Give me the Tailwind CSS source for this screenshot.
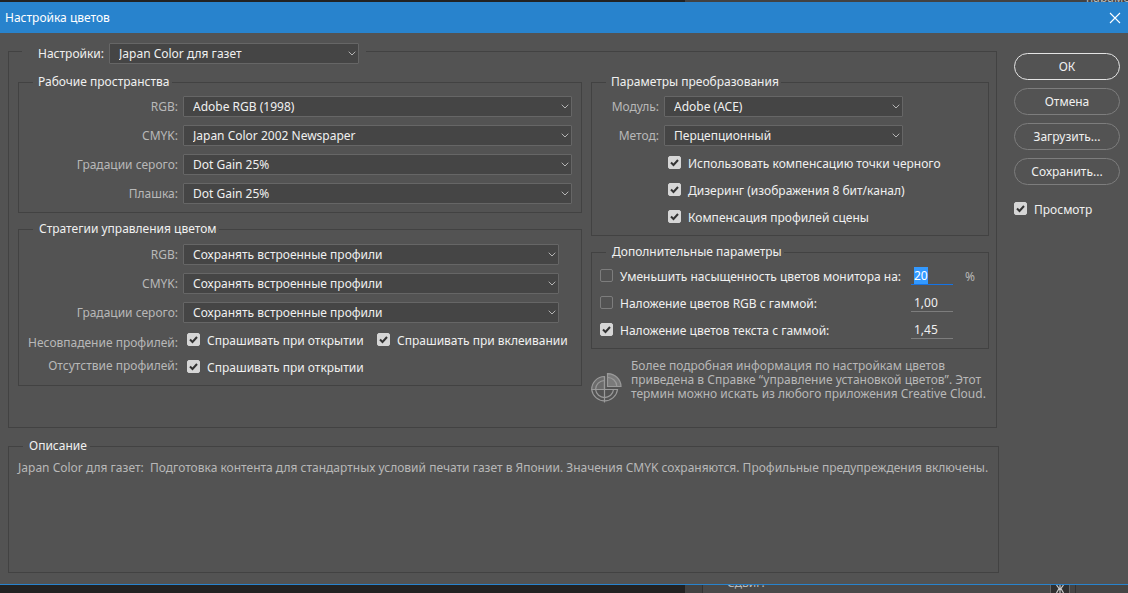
<!DOCTYPE html>
<html lang="ru">
<head>
<meta charset="utf-8">
<meta name="viewport" content="width=device-width, initial-scale=1">
<title>Настройка цветов</title>
<script src="https://cdn.jsdelivr.net/npm/@tailwindcss/browser@4"></script>
</head>
<body class="min-h-screen flex flex-col bg-[#535353] text-[#f0f0f0] text-[12px] leading-[16px] font-['Noto_Sans','Open_Sans',sans-serif]">
<svg class="hidden" aria-hidden="true">
  <symbol id="chevron" viewBox="0 0 8 5"><path d="M0.7 0.7 4 4 7.3 0.7" fill="none" stroke="#b4b4b4" stroke-width="1"/></symbol>
</svg>

<!-- Application window behind the dialog, upper edge -->
<div class="h-[2px] shrink-0 flex overflow-hidden bg-[#222]" aria-hidden="true">
  <div class="w-[685px]"></div>
  <div class="flex-1 flex items-end justify-end bg-[#424242] text-[#b8b8b8]"><span class="w-[42px] -mb-1 overflow-hidden">параметры</span></div>
</div>

<header class="h-[31px] shrink-0 flex items-center justify-between bg-[#2883cd] pl-[5px] pr-[7px] text-white">
  <h1>Настройка цветов</h1>
  <button type="button" aria-label="Закрыть" class="w-3 h-3">
    <svg viewBox="0 0 12 12" class="w-3 h-3"><path d="M1 1 11 11M11 1 1 11" stroke="#fff" stroke-width="1.1" fill="none"/></svg>
  </button>
</header>

<form class="flex-1 flex pl-2 pr-2 pt-[10px] pb-[11px]">
  <div class="flex-1 min-w-0 flex flex-col gap-[10px]">
    <fieldset class="min-w-0 mr-[2px] border border-[#424242] pl-[9px] pr-[7px] pb-[23px]">
      <legend class="ml-1 h-[17px] pl-4 pr-[7px]">
        <span class="flex items-start gap-[5px]">
          <label for="preset" class="pt-[3px]">Настройки:</label>
          <span class="relative w-[250px]">
            <select id="preset" class="block appearance-none w-full h-[21px] pl-[9px] rounded-[1px] border border-[#666] bg-[#454545]"><option>Japan Color для газет</option></select>
            <svg class="absolute right-[3px] top-2 w-2 h-[5px] pointer-events-none"><use href="#chevron"/></svg>
          </span>
        </span>
      </legend>

      <div class="flex gap-[9px] pt-[14px]">
        <div class="w-[564px] shrink-0 flex flex-col gap-2">
          <fieldset class="min-w-0 border border-[#424242] pl-2 pr-[9px] pb-2">
            <legend class="ml-[6px] pl-[5px] pr-[2px]">Рабочие пространства</legend>
            <div class="grid grid-cols-[151px_1fr] gap-x-[5px] gap-y-2 items-center pt-[6px]">
              <label for="ws-rgb" class="text-right text-[#b8b8b8]">RGB:</label>
              <span class="relative"><select id="ws-rgb" class="block appearance-none w-full h-[21px] pl-[9px] rounded-[1px] border border-[#666] bg-[#454545]"><option>Adobe RGB (1998)</option></select><svg class="absolute right-[3px] top-2 w-2 h-[5px] pointer-events-none"><use href="#chevron"/></svg></span>
              <label for="ws-cmyk" class="text-right text-[#b8b8b8]">CMYK:</label>
              <span class="relative"><select id="ws-cmyk" class="block appearance-none w-full h-[21px] pl-[9px] rounded-[1px] border border-[#666] bg-[#454545]"><option>Japan Color 2002 Newspaper</option></select><svg class="absolute right-[3px] top-2 w-2 h-[5px] pointer-events-none"><use href="#chevron"/></svg></span>
              <label for="ws-gray" class="text-right text-[#b8b8b8]">Градации серого:</label>
              <span class="relative"><select id="ws-gray" class="block appearance-none w-full h-[21px] pl-[9px] rounded-[1px] border border-[#666] bg-[#454545]"><option>Dot Gain 25%</option></select><svg class="absolute right-[3px] top-2 w-2 h-[5px] pointer-events-none"><use href="#chevron"/></svg></span>
              <label for="ws-spot" class="text-right text-[#b8b8b8]">Плашка:</label>
              <span class="relative"><select id="ws-spot" class="block appearance-none w-full h-[21px] pl-[9px] rounded-[1px] border border-[#666] bg-[#454545]"><option>Dot Gain 25%</option></select><svg class="absolute right-[3px] top-2 w-2 h-[5px] pointer-events-none"><use href="#chevron"/></svg></span>
            </div>
          </fieldset>

          <fieldset class="min-w-0 border border-[#424242] pl-2 pr-[9px] pb-[9px]">
            <legend class="ml-[6px] pl-[6px] pr-[2px]">Стратегии управления цветом</legend>
            <div class="grid grid-cols-[151px_1fr] gap-x-[5px] gap-y-2 items-center pt-[7px] pr-[13px]">
              <label for="pol-rgb" class="text-right text-[#b8b8b8]">RGB:</label>
              <span class="relative"><select id="pol-rgb" class="block appearance-none w-full h-[21px] pl-[9px] rounded-[1px] border border-[#666] bg-[#454545]"><option>Сохранять встроенные профили</option></select><svg class="absolute right-[3px] top-2 w-2 h-[5px] pointer-events-none"><use href="#chevron"/></svg></span>
              <label for="pol-cmyk" class="text-right text-[#b8b8b8]">CMYK:</label>
              <span class="relative"><select id="pol-cmyk" class="block appearance-none w-full h-[21px] pl-[9px] rounded-[1px] border border-[#666] bg-[#454545]"><option>Сохранять встроенные профили</option></select><svg class="absolute right-[3px] top-2 w-2 h-[5px] pointer-events-none"><use href="#chevron"/></svg></span>
              <label for="pol-gray" class="text-right text-[#b8b8b8]">Градации серого:</label>
              <span class="relative"><select id="pol-gray" class="block appearance-none w-full h-[21px] pl-[9px] rounded-[1px] border border-[#666] bg-[#454545]"><option>Сохранять встроенные профили</option></select><svg class="absolute right-[3px] top-2 w-2 h-[5px] pointer-events-none"><use href="#chevron"/></svg></span>
            </div>
            <div class="flex gap-[9px] pt-[10px]">
              <div class="w-[151px] pt-[2px] flex flex-col gap-[7px] text-right text-[#b8b8b8]"><span>Несовпадение профилей:</span><span>Отсутствие профилей:</span></div>
              <div class="grid grid-cols-[190px_auto] gap-y-[11px] whitespace-nowrap">
                <label class="flex gap-[7px]"><input type="checkbox" checked class="appearance-none shrink-0 w-[13px] h-[13px] rounded-[2px] border border-[#7d7d7d] checked:border-[#d6d6d6] checked:bg-[#d6d6d6] checked:bg-[url('data:image/svg+xml,%3Csvg%20xmlns=%22http://www.w3.org/2000/svg%22%20viewBox=%220%200%2011%2011%22%3E%3Cpath%20d=%22M2%205.5%204.5%208%209%203%22%20fill=%22none%22%20stroke=%22%23333%22%20stroke-width=%222%22/%3E%3C/svg%3E')]"><span>Спрашивать при открытии</span></label>
                <label class="flex gap-[7px]"><input type="checkbox" checked class="appearance-none shrink-0 w-[13px] h-[13px] rounded-[2px] border border-[#7d7d7d] checked:border-[#d6d6d6] checked:bg-[#d6d6d6] checked:bg-[url('data:image/svg+xml,%3Csvg%20xmlns=%22http://www.w3.org/2000/svg%22%20viewBox=%220%200%2011%2011%22%3E%3Cpath%20d=%22M2%205.5%204.5%208%209%203%22%20fill=%22none%22%20stroke=%22%23333%22%20stroke-width=%222%22/%3E%3C/svg%3E')]"><span>Спрашивать при вклеивании</span></label>
                <label class="flex gap-[7px]"><input type="checkbox" checked class="appearance-none shrink-0 w-[13px] h-[13px] rounded-[2px] border border-[#7d7d7d] checked:border-[#d6d6d6] checked:bg-[#d6d6d6] checked:bg-[url('data:image/svg+xml,%3Csvg%20xmlns=%22http://www.w3.org/2000/svg%22%20viewBox=%220%200%2011%2011%22%3E%3Cpath%20d=%22M2%205.5%204.5%208%209%203%22%20fill=%22none%22%20stroke=%22%23333%22%20stroke-width=%222%22/%3E%3C/svg%3E')]"><span>Спрашивать при открытии</span></label>
              </div>
            </div>
          </fieldset>
        </div>

        <div class="flex-1 min-w-0 flex flex-col whitespace-nowrap">
          <fieldset class="min-w-0 border border-[#424242] pl-2 pr-[85px] pb-[9px]">
            <legend class="ml-[6px] pl-[5px] pr-[2px]">Параметры преобразования</legend>
            <div class="grid grid-cols-[59px_1fr] gap-x-[5px] gap-y-2 items-center pt-[6px]">
              <label for="engine" class="text-right text-[#b8b8b8]">Модуль:</label>
              <span class="relative"><select id="engine" class="block appearance-none w-full h-[21px] pl-[9px] rounded-[1px] border border-[#666] bg-[#454545]"><option>Adobe (ACE)</option></select><svg class="absolute right-[3px] top-2 w-2 h-[5px] pointer-events-none"><use href="#chevron"/></svg></span>
              <label for="intent" class="text-right text-[#b8b8b8]">Метод:</label>
              <span class="relative"><select id="intent" class="block appearance-none w-full h-[21px] pl-[9px] rounded-[1px] border border-[#666] bg-[#454545]"><option>Перцепционный</option></select><svg class="absolute right-[3px] top-2 w-2 h-[5px] pointer-events-none"><use href="#chevron"/></svg></span>
            </div>
            <div class="flex flex-col gap-[11px] pl-[68px] pt-[10px]">
              <label class="flex gap-[7px]"><input type="checkbox" checked class="appearance-none shrink-0 w-[13px] h-[13px] rounded-[2px] border border-[#7d7d7d] checked:border-[#d6d6d6] checked:bg-[#d6d6d6] checked:bg-[url('data:image/svg+xml,%3Csvg%20xmlns=%22http://www.w3.org/2000/svg%22%20viewBox=%220%200%2011%2011%22%3E%3Cpath%20d=%22M2%205.5%204.5%208%209%203%22%20fill=%22none%22%20stroke=%22%23333%22%20stroke-width=%222%22/%3E%3C/svg%3E')]"><span>Использовать компенсацию точки черного</span></label>
              <label class="flex gap-[7px]"><input type="checkbox" checked class="appearance-none shrink-0 w-[13px] h-[13px] rounded-[2px] border border-[#7d7d7d] checked:border-[#d6d6d6] checked:bg-[#d6d6d6] checked:bg-[url('data:image/svg+xml,%3Csvg%20xmlns=%22http://www.w3.org/2000/svg%22%20viewBox=%220%200%2011%2011%22%3E%3Cpath%20d=%22M2%205.5%204.5%208%209%203%22%20fill=%22none%22%20stroke=%22%23333%22%20stroke-width=%222%22/%3E%3C/svg%3E')]"><span>Дизеринг (изображения 8 бит/канал)</span></label>
              <label class="flex gap-[7px]"><input type="checkbox" checked class="appearance-none shrink-0 w-[13px] h-[13px] rounded-[2px] border border-[#7d7d7d] checked:border-[#d6d6d6] checked:bg-[#d6d6d6] checked:bg-[url('data:image/svg+xml,%3Csvg%20xmlns=%22http://www.w3.org/2000/svg%22%20viewBox=%220%200%2011%2011%22%3E%3Cpath%20d=%22M2%205.5%204.5%208%209%203%22%20fill=%22none%22%20stroke=%22%23333%22%20stroke-width=%222%22/%3E%3C/svg%3E')]"><span>Компенсация профилей сцены</span></label>
            </div>
          </fieldset>

          <fieldset class="min-w-0 mt-2 border border-[#424242] pl-2 pb-[9px]">
            <legend class="ml-[6px] pl-[6px] pr-[2px]">Дополнительные параметры</legend>
            <div class="grid grid-cols-[311px_42px_auto] gap-y-[9px] pt-[7px]">
              <label class="flex gap-[7px] pt-[2px]"><input type="checkbox" class="appearance-none shrink-0 w-[13px] h-[13px] rounded-[2px] border border-[#7d7d7d]"><span>Уменьшить насыщенность цветов монитора на:</span></label>
              <input id="desat" aria-label="Насыщенность, %" value="20" class="w-full h-[18px] pl-[3px] border-b border-[#1473e6] outline-none selection:bg-[#3399ff] selection:text-white">
              <span class="pl-3 pt-[2px] text-[#b8b8b8]">%</span>
              <label class="flex gap-[7px] pt-[2px]"><input type="checkbox" class="appearance-none shrink-0 w-[13px] h-[13px] rounded-[2px] border border-[#7d7d7d]"><span>Наложение цветов RGB с гаммой:</span></label>
              <input aria-label="Гамма RGB" value="1,00" class="w-full h-[18px] pl-[3px] border-b border-[#7d7d7d]">
              <span></span>
              <label class="flex gap-[7px] pt-[2px]"><input type="checkbox" checked class="appearance-none shrink-0 w-[13px] h-[13px] rounded-[2px] border border-[#7d7d7d] checked:border-[#d6d6d6] checked:bg-[#d6d6d6] checked:bg-[url('data:image/svg+xml,%3Csvg%20xmlns=%22http://www.w3.org/2000/svg%22%20viewBox=%220%200%2011%2011%22%3E%3Cpath%20d=%22M2%205.5%204.5%208%209%203%22%20fill=%22none%22%20stroke=%22%23333%22%20stroke-width=%222%22/%3E%3C/svg%3E')]"><span>Наложение цветов текста с гаммой:</span></label>
              <input aria-label="Гамма текста" value="1,45" class="w-full h-[18px] pl-[3px] border-b border-[#7d7d7d]">
            </div>
          </fieldset>

          <div class="flex gap-[9px] pt-[10px] text-[#b8b8b8]">
            <svg viewBox="0 0 31 31" class="shrink-0 mt-[14px] w-[31px] h-[31px]" fill="none" stroke="#9a9a9a" stroke-width="1.2">
              <path d="M13.5 3.5A13 13 0 0 0 .7 16.5H13.5Z" fill="#6b6b6b"/>
              <path d="M.7 16.5A13 13 0 0 0 26.5 16.5Z"/>
              <path d="M13.5 7.5A9 9 0 0 0 4.6 16.5A9 9 0 0 0 22.5 16.5M13.5 3.5V29.5"/>
              <path d="M16.5.6V13.5H30A13.3 13.3 0 0 0 16.5.6Z" fill="#7a7a7a"/>
              <path d="M16.5 4.5A9 9 0 0 1 25.8 13.5"/>
            </svg>
            <p class="leading-[14px]">Более подробная информация по настройкам цветов<br>приведена в Справке “управление установкой цветов”. Этот<br>термин можно искать из любого приложения Creative Cloud.</p>
          </div>
        </div>
      </div>
    </fieldset>

    <fieldset class="min-w-0 flex-1 border border-[#424242] px-[9px]">
      <legend class="ml-[5px] pl-[6px] pr-[3px]">Описание</legend>
      <p class="pt-[6px] whitespace-pre text-[#b8b8b8]">Japan Color для газет:  Подготовка контента для стандартных условий печати газет в Японии. Значения CMYK сохраняются. Профильные предупреждения включены.</p>
    </fieldset>
  </div>

  <aside class="ml-[15px] mt-[10px] w-[106px] shrink-0 flex flex-col gap-2">
    <button type="button" class="h-[27px] rounded-full border border-[#e4e4e4]">ОК</button>
    <button type="button" class="h-[27px] rounded-full border border-[#7d7d7d]">Отмена</button>
    <button type="button" class="h-[27px] rounded-full border border-[#7d7d7d]">Загрузить...</button>
    <button type="button" class="h-[27px] rounded-full border border-[#7d7d7d]">Сохранить...</button>
    <label class="flex gap-[7px] pt-[9px]"><input type="checkbox" checked class="appearance-none shrink-0 w-[13px] h-[13px] rounded-[2px] border border-[#7d7d7d] checked:border-[#d6d6d6] checked:bg-[#d6d6d6] checked:bg-[url('data:image/svg+xml,%3Csvg%20xmlns=%22http://www.w3.org/2000/svg%22%20viewBox=%220%200%2011%2011%22%3E%3Cpath%20d=%22M2%205.5%204.5%208%209%203%22%20fill=%22none%22%20stroke=%22%23333%22%20stroke-width=%222%22/%3E%3C/svg%3E')]"><span>Просмотр</span></label>
  </aside>
</form>

<!-- Application window behind the dialog, lower edge -->
<div class="h-[9px] shrink-0 flex overflow-hidden border-t border-[#2883cd] bg-[#222]" aria-hidden="true">
  <div class="w-[685px]"></div>
  <div class="w-[18px] bg-[#424242] border-r border-[#333]"></div>
  <div class="flex-1 bg-[#494949] pl-6 text-[#b8b8b8]"><div class="-mt-[10px]">Сдвиг:</div></div>
  <div class="w-5 pl-1 bg-[#303030] border-x border-[#666]">
    <svg viewBox="0 0 10 8" class="w-[10px] h-2" fill="none" stroke="#c8c8c8" stroke-width="1.2"><path d="M5 0V8M1.5 0 4 3.5 1.5 8M8.5 0 6 3.5 8.500 8"/></svg>
  </div>
  <div class="w-[6px] bg-[#454545] border-r border-[#333]"></div>
  <div class="w-[52px] bg-[#454545]"></div>
</div>
<script>
  const field = document.getElementById('desat');
  field.focus();
  field.select();
</script>
</body>
</html>
